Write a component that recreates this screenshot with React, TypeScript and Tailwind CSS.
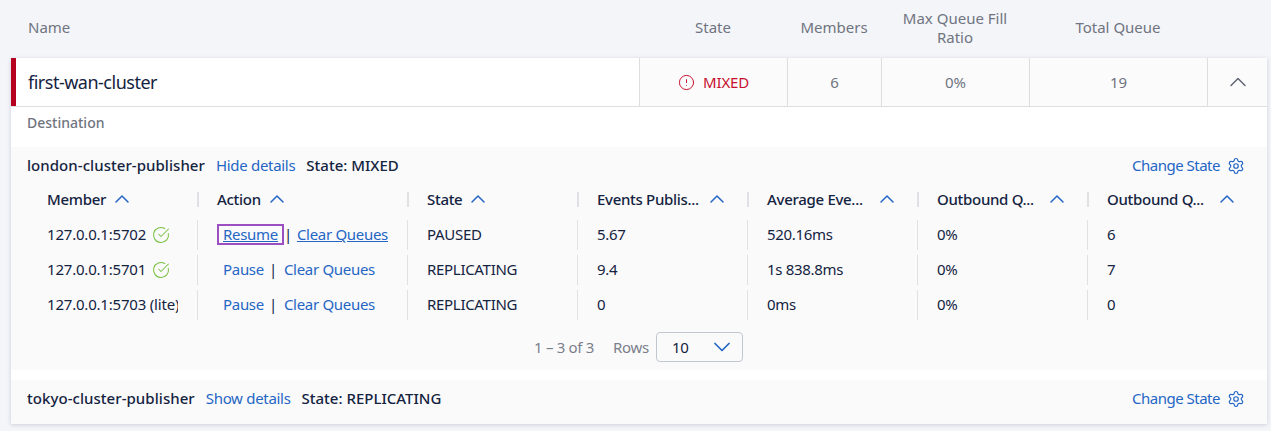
import React from 'react';
import { ChevronDown, ChevronUp, CircleAlert, CircleCheckBig, Settings } from 'lucide-react';

const font = "font-['Noto_Sans',sans-serif]";
const ink = 'text-[#14233f]';
const blue = 'text-[#2566c4]';

const columns = ['Member', 'Action', 'State', 'Events Publis...', 'Average Eve...', 'Outbound Q...', 'Outbound Q...'];
const gridCols = 'grid grid-cols-[170px_210px_170px_170px_170px_170px_170px]';

const rows = [
    { member: '127.0.0.1:5702', ok: true, action: 'Resume', state: 'PAUSED', rate: '5.67', avg: '520.16ms', fill: '0%', size: '6' },
    { member: '127.0.0.1:5701', ok: true, action: 'Pause', state: 'REPLICATING', rate: '9.4', avg: '1s 838.8ms', fill: '0%', size: '7' },
    { member: '127.0.0.1:5703 (lite)', ok: false, action: 'Pause', state: 'REPLICATING', rate: '0', avg: '0ms', fill: '0%', size: '0' },
];

const Cell: React.FC<{ first?: boolean; children: React.ReactNode }> = ({ first, children }) => (
    <div className="flex h-[35px] items-center">
        <div className={`flex h-[30px] w-full items-center ${first ? 'pl-5' : 'border-l border-[#dfe1e4] pl-[19px]'}`}>{children}</div>
    </div>
);

const GroupHeader: React.FC<{ name: string; link: string; state: string }> = ({ name, link, state }) => (
    <div className="flex h-[37px] items-center pl-4 pr-[22px]">
        <span className={`text-[15px] font-medium tracking-[0.05px] ${ink}`}>{name}</span>
        <a className={`ml-[11px] text-[15px] tracking-[-0.3px] ${blue}`}>{link}</a>
        <span className={`ml-[11px] text-[15px] font-medium ${ink}`}>{state}</span>
        <a className={`ml-auto text-[15px] tracking-[-0.5px] ${blue}`}>Change State</a>
        <Settings className={`ml-[7px] h-[18px] w-[18px] ${blue}`} strokeWidth={1.6} />
    </div>
);

export default function App() {
    return (
        <div className={`h-[431px] w-[1271px] overflow-hidden bg-[#f4f5f9] ${font}`}>
            <div className="grid h-[58px] grid-cols-[628px_148px_94px_148px_178px] pb-[3px] pl-[11px] text-[15px] leading-[19px] text-[#6f7480]">
                <div className="flex items-center pl-[17px]">Name</div>
                <div className="flex items-center justify-center">State</div>
                <div className="flex items-center justify-center">Members</div>
                <div className="flex items-center justify-center text-center">Max Queue Fill<br />Ratio</div>
                <div className="flex items-center justify-center">Total Queue</div>
            </div>

            <div className="ml-[11px] w-[1256px] bg-white shadow-[0_1px_4px_rgba(30,40,70,0.18)]">
                <div className="flex h-[49px] border-b border-[#dcdee2]">
                    <div className="w-[5px] bg-[#b5001f]" />
                    <div className={`flex w-[623px] items-center pl-3 text-[18px] tracking-[-0.5px] ${ink}`}>first-wan-cluster</div>
                    <div className="flex w-[148px] items-center justify-center border-l border-[#dcdee2] bg-[#fbfbfc] text-[15px] tracking-[-0.2px] text-[#c8102e]">
                        <CircleAlert className="mr-[8px] h-[17px] w-[17px]" strokeWidth={1.4} />
                        MIXED
                    </div>
                    <div className="flex w-[94px] items-center justify-center border-l border-[#dcdee2] bg-[#fbfbfc] text-[15px] text-[#6f7480]">6</div>
                    <div className="flex w-[148px] items-center justify-center border-l border-[#dcdee2] bg-[#fbfbfc] text-[15px] text-[#6f7480]">0%</div>
                    <div className="flex w-[178px] items-center justify-center border-l border-[#dcdee2] bg-[#fbfbfc] text-[15px] text-[#6f7480]">19</div>
                    <div className="flex flex-1 items-center justify-center border-l border-[#dcdee2] bg-[#fbfbfc] text-[#5f6470]">
                        <ChevronUp className="h-[28px] w-[28px]" strokeWidth={1.25} />
                    </div>
                </div>

                <div className="flex h-[40px] items-start pl-4 pt-[5px] text-[14px] font-medium text-[#6f7480]">Destination</div>

                <div className="h-[223px] bg-[#fafafb]">
                    <GroupHeader name="london-cluster-publisher" link="Hide details" state="State: MIXED" />
                    <div className={`${gridCols} ml-4 h-[30px] items-center text-[15px] font-medium tracking-[-0.3px] ${ink}`}>
                        {columns.map((c, i) => (
                            <div key={i} className={`flex h-[15px] items-center ${i ? 'border-l-2 border-[#dfe1e4] pl-[18px]' : 'pl-5'}`}>
                                <span className={i > 2 ? 'w-[103px] whitespace-nowrap' : ''}>{c}</span>
                                <ChevronUp className={`h-[24px] w-[24px] ${i > 2 ? 'ml-[5px]' : 'ml-[4px]'} ${blue}`} strokeWidth={1.5} />
                            </div>
                        ))}
                    </div>
                    <div className="mt-[3px]">
                        {rows.map((r, idx) => (
                            <div key={r.member} className={`${gridCols} ml-4 text-[15px] tracking-[-0.3px] ${ink}`}>
                                <Cell first>
                                    <span className={`overflow-hidden whitespace-nowrap tracking-[-0.2px] ${r.ok ? 'w-[105px]' : 'w-[131px]'}`}>{r.member}</span>
                                    {r.ok && <CircleCheckBig className="h-[18px] w-[18px] shrink-0 text-[#7ac143]" strokeWidth={1.4} />}
                                </Cell>
                                <Cell>
                                    {idx === 0 ? (
                                        <>
                                            <a className={`border-2 border-[#9b4fc0] px-[4px] leading-[17px] underline ${blue}`}>Resume</a>
                                            <span>|</span>
                                            <a className={`ml-[5px] underline ${blue}`}>Clear Queues</a>
                                        </>
                                    ) : (
                                        <>
                                            <a className={`ml-[6px] ${blue}`}>{r.action}</a>
                                            <span className="ml-[5px]">|</span>
                                            <a className={`ml-[7px] ${blue}`}>Clear Queues</a>
                                        </>
                                    )}
                                </Cell>
                                <Cell>{r.state}</Cell>
                                <Cell>{r.rate}</Cell>
                                <Cell>{r.avg}</Cell>
                                <Cell>{r.fill}</Cell>
                                <Cell>{r.size}</Cell>
                            </div>
                        ))}
                    </div>
                    <div className="mt-[10px] flex h-[30px] items-center pl-[523px] text-[15px] tracking-[-0.3px] text-[#7a7f8a]">
                        <span>1 – 3 of 3</span>
                        <span className="ml-[19px]">Rows</span>
                        <div className={`ml-[7px] flex h-[30px] w-[87px] items-center justify-between rounded-[4px] border border-[#c3c8d0] pl-[15px] pr-[6px] ${ink}`}>
                            10
                            <ChevronDown className={`h-[28px] w-[28px] ${blue}`} strokeWidth={1.5} />
                        </div>
                    </div>
                </div>

                <div className="mt-[10px] h-[44px] bg-[#fafafb]">
                    <GroupHeader name="tokyo-cluster-publisher" link="Show details" state="State: REPLICATING" />
                </div>
            </div>
        </div>
    );
}
